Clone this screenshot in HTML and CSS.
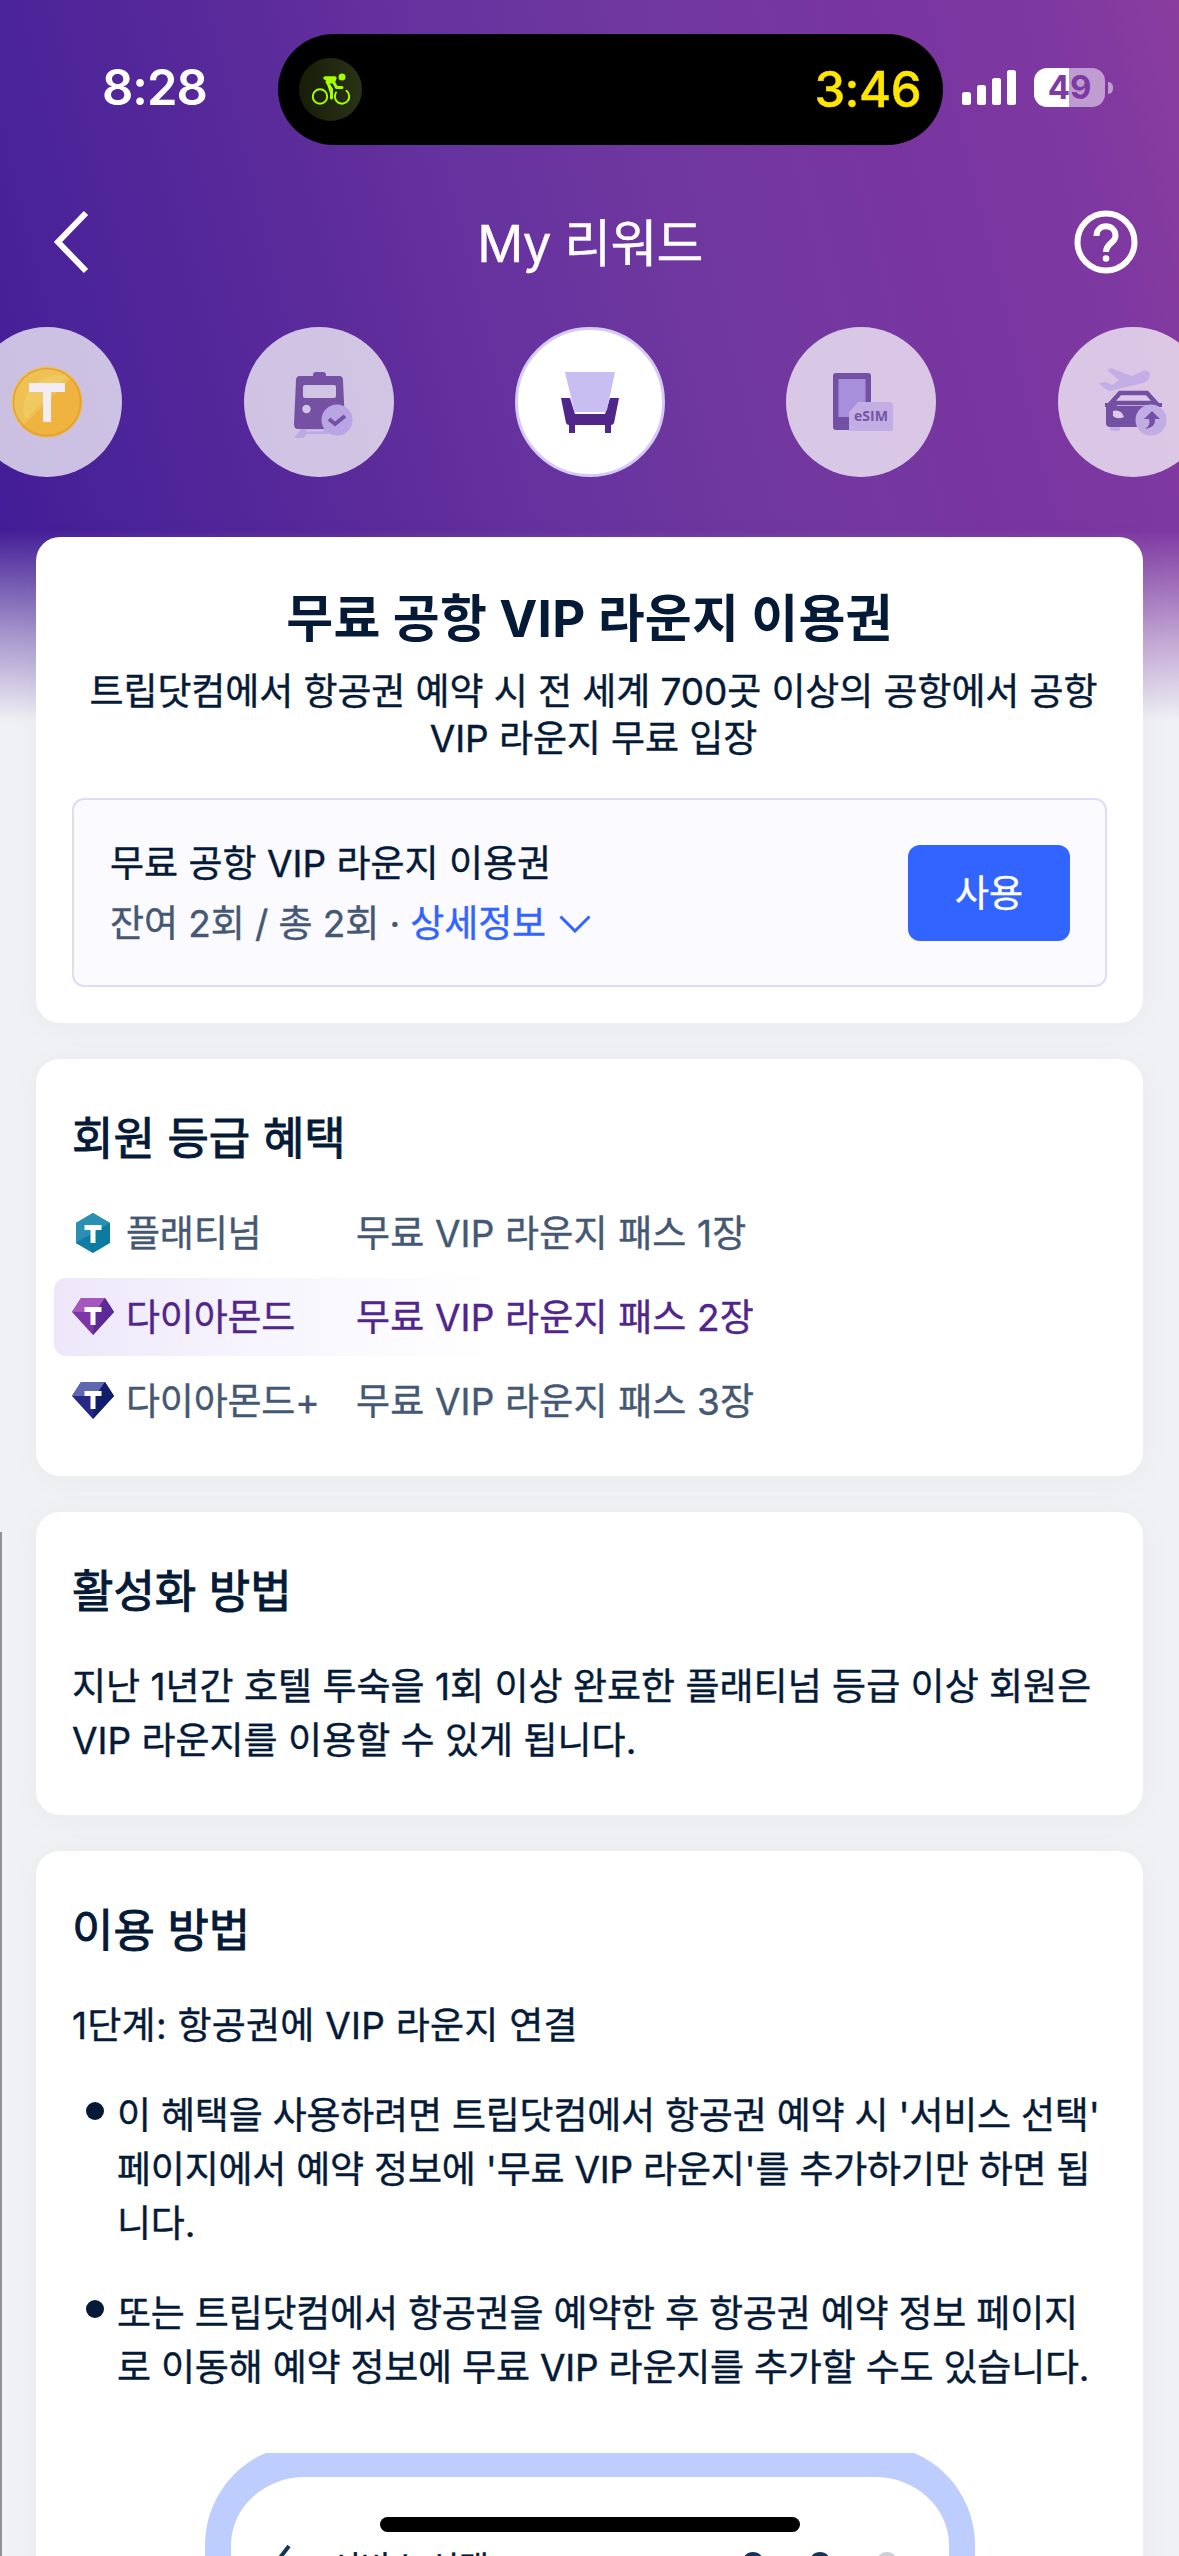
FILE: index.html
```html
<!DOCTYPE html>
<html lang="ko">
<head>
<meta charset="utf-8">
<title>My 리워드</title>
<link rel="stylesheet" href="styles.css">
</head>
<body>
<div class="screen">
  <div class="edge"></div>
  <div class="status">
    <div class="clock">8:28</div>
    <div class="island">
      <div class="activity">
        <svg width="40" height="34" viewBox="0 0 40 34" fill="none" stroke="#a6ff00" stroke-width="2" stroke-linecap="round" stroke-linejoin="round">
          <circle cx="9" cy="24.500" r="7.200"/><path d="M35.500 18.800A7.200 7.200 0 1 1 25 20.500"/>
          <circle cx="31" cy="5" r="3.500" fill="#a6ff00" stroke="none"/>
          <path d="M14 6H24L22.500 10L25.500 15.500H31" stroke-width="3"/>
          <path d="M14 6H24L22 10H16L20.500 17V26" stroke-width="3" fill="#a6ff00"/>
        </svg>
      </div>
      <div class="timer">3:46</div>
    </div>
    <svg class="signal" width="54" height="36" viewBox="0 0 54 36" fill="#fff"><rect y="22" width="9" height="13" rx="2.500"/><rect x="15" y="15" width="9" height="20" rx="2.500"/><rect x="30" y="8" width="9" height="27" rx="2.500"/><rect x="45" y="0" width="9" height="35" rx="2.500"/></svg>
    <div class="battery">49</div>
    <div class="nub"></div>
  </div>
  <div class="nav">
    <svg width="40" height="64" viewBox="0 0 40 64" fill="none" stroke="#fff" stroke-width="6"><path d="M34 3L6 32L34 61"/></svg>
    <div class="nav-title">My 리워드</div>
    <svg width="64" height="64" viewBox="0 0 64 64" fill="none" stroke="#fff" stroke-width="6"><circle cx="32" cy="32" r="28.500"/><path d="M22.500 26C22.500 13 41.500 13 41.500 26C41.500 33 32 33 32 42"/><circle cx="32" cy="48.500" r="3.300" fill="#fff" stroke="none"/></svg>
  </div>
  <div class="tabs">
    <div class="tab">
      <svg width="100" height="100" viewBox="0 0 100 100"><circle cx="50" cy="50" r="35.500" fill="#efc052"/><path d="M25 75A35 35 0 0 0 75 25Z" fill="#efb440"/><path d="M28 68A34 34 0 0 1 70 25Z" fill="#f0ca60"/><circle cx="50" cy="50" r="33.500" fill="none" stroke="#e2a03c" stroke-width="1.500"/><path d="M32 31H68V40H54V70H46V40H32Z" fill="#f2edf4"/></svg>
    </div>
    <div class="tab">
      <svg width="100" height="100" viewBox="0 0 100 100"><path d="M33 76H56L60 82H38L34 86H25Z" fill="#bcaae3"/><path d="M37 78.500H54" stroke="#d1c4e5" stroke-width="1.500"/><path d="M44 23Q44 20 47 20H54Q57 20 57 23V24H70Q74 24 74 28L76 72Q76 77 72 77H29Q25 77 25 72L27 28Q27 24 31 24H44Z" fill="#7551a4"/><rect x="34" y="33" width="33" height="13" rx="2" fill="#d1c4e5"/><circle cx="37.500" cy="57" r="4.200" fill="#d1c4e5"/><circle cx="68" cy="68" r="15.500" fill="#b9a5e3"/><path d="M60 67L66 72L76 64" fill="none" stroke="#7551a4" stroke-width="4"/></svg>
    </div>
    <div class="tab active">
      <svg width="100" height="100" viewBox="0 0 100 100"><path d="M21 46H30L35 62H65L70 46H79L74 71Q73 73 71 73V81H65V73H35V81H29V73Q27 73 26 71Z" fill="#50268b"/><path d="M25 20H75L67 58Q66 60 64 60H36Q34 60 34 58Z" fill="#c9bef1"/></svg>
    </div>
    <div class="tab">
      <svg width="100" height="100" viewBox="0 0 100 100"><rect x="22" y="21" width="38" height="57" rx="3" fill="#7450a5"/><rect x="27.500" y="27" width="27" height="38" fill="#a78fdc"/><path d="M47 50H79Q82 50 82 53V76Q82 79 79 79H38V60Z" fill="#c2aee4"/><text x="43" y="69" font-family="Open Sans, sans-serif" font-weight="700" font-size="15" textLength="34" lengthAdjust="spacingAndGlyphs" fill="#7653a6">eSIM</text></svg>
    </div>
    <div class="tab">
      <svg width="100" height="100" viewBox="0 0 100 100"><path d="M16 31L23 30L29 33L36 28L24 18L28 16L49 24L60 19Q67 18 67 23Q67 28 60 31L27 39Q21 37 16 31Z" fill="#c3afe5"/><rect x="27" y="73" width="10" height="6" rx="2" fill="#c3afe5"/><path d="M28 51L37 41H64L73 51Z" fill="#dccae7" stroke="#7450a5" stroke-width="4.500"/><path d="M22 51H32L34 54H67L69 51H79V55H76V71Q76 75 72 75H27Q23 75 23 71V55H22Z" fill="#7450a5"/><path d="M30 59Q38 57 41 65Q34 68 30 64Z" fill="#dccae7"/><circle cx="68" cy="68" r="15.500" fill="#c1ade4"/><path d="M69 59L77 67H72Q73 75 62 77Q68 73 66 67H61Z" fill="#7450a5"/></svg>
    </div>
  </div>
  <div class="cards">
    <section class="card hero">
      <h1>무료 공항 VIP 라운지 이용권</h1>
      <p class="sub">트립닷컴에서 항공권 예약 시 전 세계 700곳 이상의 공항에서 공항<br>VIP 라운지 무료 입장</p>
      <div class="voucher">
        <div class="voucher-text">
          <div class="v1">무료 공항 VIP 라운지 이용권</div>
          <div class="v2">잔여 2회 / 총 2회 · <span class="link">상세정보</span><svg width="32" height="18" viewBox="0 0 32 18" fill="none" stroke="#3264ff" stroke-width="3"><path d="M1.500 1.500L16 16L30.500 1.500"/></svg></div>
        </div>
        <div class="use">사용</div>
      </div>
    </section>
    <section class="card tiers">
      <h2>회원 등급 혜택</h2>
      <div class="tier">
        <svg width="42" height="42" viewBox="0 0 42 42"><path d="M21 1L38 11V31L21 41L4 31V11Z" fill="#0b7c9f"/><path d="M21 1L38 11L4 31V11Z" fill="#298fb3"/><path d="M4 31L13 25L21 41Z" fill="#117fa5"/><path d="M12.500 13H29.500V18H23.500V31H18.500V18H12.500Z" fill="#fff"/></svg>
        <span class="name">플래티넘</span><span class="perk">무료 VIP 라운지 패스 1장</span>
      </div>
      <div class="tier current">
        <svg width="42" height="42" viewBox="0 0 42 42"><path d="M9 2H33L42 16L21 39L0 16Z" fill="#7d35a8"/><path d="M9 2H33L25 16H0Z" fill="#a657bd"/><path d="M33 2L42 16L21 39L23 16Z" fill="#5c2996"/><path d="M12.500 11H29.500V16H23.500V29H18.500V16H12.500Z" fill="#fff"/></svg>
        <span class="name">다이아몬드</span><span class="perk">무료 VIP 라운지 패스 2장</span>
      </div>
      <div class="tier">
        <svg width="42" height="42" viewBox="0 0 42 42"><path d="M9 2H33L42 16L21 39L0 16Z" fill="#252884"/><path d="M9 2H33L25 16H0Z" fill="#5f67b1"/><path d="M33 2L42 16L21 39L23 16Z" fill="#101e6c"/><path d="M12.500 11H29.500V16H23.500V29H18.500V16H12.500Z" fill="#fff"/></svg>
        <span class="name">다이아몬드+</span><span class="perk">무료 VIP 라운지 패스 3장</span>
      </div>
    </section>
    <section class="card activate">
      <h2>활성화 방법</h2>
      <p>지난 1년간 호텔 투숙을 1회 이상 완료한 플래티넘 등급 이상 회원은<br>VIP 라운지를 이용할 수 있게 됩니다.</p>
    </section>
    <section class="card usage">
      <h2>이용 방법</h2>
      <p>1단계: 항공권에 VIP 라운지 연결</p>
      <ul>
        <li>이 혜택을 사용하려면 트립닷컴에서 항공권 예약 시 '서비스 선택'<br>페이지에서 예약 정보에 '무료 VIP 라운지'를 추가하기만 하면 됩<br>니다.</li>
        <li>또는 트립닷컴에서 항공권을 예약한 후 항공권 예약 정보 페이지<br>로 이동해 예약 정보에 무료 VIP 라운지를 추가할 수도 있습니다.</li>
      </ul>
      <div class="preview"><div class="phone">
        <svg width="14" height="28" viewBox="0 0 14 28" fill="none" stroke="#17345c" stroke-width="4"><path d="M12 1L2 14L12 27"/></svg>
        <span class="phone-title">서비스 선택</span>
        <i class="dot"></i><i class="dot"></i><i class="dot pale"></i>
      </div></div>
    </section>
  </div>
  <div class="home"></div>
</div>
</body>
</html>
```
FILE: styles.css
```css
* { box-sizing: border-box; margin: 0; padding: 0; }
body { margin: 0; background: #f0f1f5; }
.screen {
  position: relative; width: 1179px; height: 2556px; overflow: hidden;
  font-family: Inter, "Noto Sans CJK KR", sans-serif;
  font-size: 37px; color: #051a37; white-space: nowrap;
  -webkit-text-stroke: .4px currentColor;
  display: flex; flex-direction: column;
  background:
    linear-gradient(to bottom, rgba(240,241,245,0) 530px, rgba(240,241,245,.6) 640px, #f0f1f5 722px),
    linear-gradient(76deg, #421c97 0%, #431d97 4%, #4c2499 14%, #56289a 26%, #5f2d9b 35%, #67339f 46%, #6d369f 55%, #7338a0 65%, #7835a0 76%, #7e38a1 90%, #8a3d9e 100%) 0 0 / 1179px 730px no-repeat,
    #f0f1f5;
}
svg { display: block; flex: none; }
.edge { position: absolute; left: 0; top: 1532px; width: 2px; height: 1024px; background: #919191; }

.status { display: flex; align-items: center; height: 178px; flex: none; color: #fff; }
.clock { width: 176px; margin: -3px 0 0 102px; font-size: 49px; font-weight: 600; letter-spacing: -1px; -webkit-text-stroke: 0; }
.island { width: 665px; height: 111px; border-radius: 56px; background: #000; display: flex; align-items: center; justify-content: space-between; padding: 0 22px 0 21px; }
.activity { width: 63px; height: 63px; border-radius: 50%; background: linear-gradient(90deg, #171d08, #293317); display: flex; align-items: center; justify-content: center; }
.timer { color: #ffe600; font-size: 49px; font-weight: 500; letter-spacing: -.5px; }
.signal { margin: -2px 0 0 19px; }
.battery { margin: -3px 0 0 18px; width: 71px; height: 39px; border-radius: 13px; background: linear-gradient(90deg, #fff 35px, rgba(255,255,255,.5) 35px); color: #7d3aa3; font-size: 33px; font-weight: 700; line-height: 39px; text-align: center; -webkit-text-stroke: 0; }
.nub { width: 5px; height: 12px; margin: -3px 0 0 3px; border-radius: 0 6px 6px 0; background: rgba(255,255,255,.5); }

.nav { display: flex; align-items: center; justify-content: space-between; height: 128px; padding: 0 41px 0 52px; flex: none; color: #fff; }
.nav-title { font-size: 51px; line-height: 60px; margin: 4px 0 0 14px; letter-spacing: -.8px; }

.tabs { display: flex; justify-content: center; gap: 121.300px; margin: 21px 0 0 1px; height: 150px; flex: none; }
.tab { flex: none; width: 150px; height: 150px; border-radius: 50%; background: rgba(255,255,255,.72); display: flex; align-items: center; justify-content: center; -webkit-text-stroke: 0; }
.active { background: #fff; border: 3px solid #d5c9f6; }

.cards { display: flex; flex-direction: column; gap: 36px; padding: 60px 36px 0; }
.card { background: #fff; border-radius: 24px; padding: 0 36px; box-shadow: 0 4px 36px rgba(20,60,70,.03); flex: none; }
h1 { font-size: 51px; line-height: 60px; font-weight: 700; text-align: center; letter-spacing: .2px; -webkit-text-stroke: 0; }
h2 { font-size: 45px; line-height: 60px; font-weight: 400; -webkit-text-stroke: 1px currentColor; }
.hero { height: 486px; padding-top: 52px; }
.sub { line-height: 46.500px; margin: 20px -8px 0 0; text-align: center; letter-spacing: -.1px; }
.voucher { margin-top: 36px; height: 189px; border: 2px solid #e2daf6; border-radius: 12px; background: #fbfaff; display: flex; align-items: center; justify-content: space-between; padding: 0 35px 0 36px; }
.v1, .v2 { line-height: 60px; position: relative; top: 1px; }
.v2 { color: #455873; display: flex; align-items: center; white-space: pre; letter-spacing: -.1px; }
.link { color: #3264ff; }
.v2 svg { margin-left: 13px; }
.use { width: 162px; height: 96px; border-radius: 12px; background: #3264ff; color: #fff; line-height: 97px; text-align: center; }

.tiers { height: 417px; padding-top: 50px; display: flex; flex-direction: column; }
.tiers h2 { margin-bottom: 25px; }
.tier { display: flex; align-items: center; height: 78px; margin: 0 -18px 6px; padding-left: 18px; border-radius: 12px; color: #455873; }
.name { width: 230px; margin: -4px 0 0 12px; letter-spacing: -.2px; }
.perk { margin-top: -4px; letter-spacing: .15px; }
.current { background: linear-gradient(90deg, #ede7f9, #f6f4fd 190px, rgba(255,255,255,0) 440px); color: #50268b; }

.activate { height: 303px; padding-top: 50px; }
.activate p { line-height: 54px; margin-top: 38px; }
.usage { height: 760px; padding-top: 50px; }
.usage p { line-height: 54px; margin-top: 38px; letter-spacing: .25px; }
ul { list-style: none; display: flex; flex-direction: column; gap: 36px; margin-top: 36px; }
li { position: relative; line-height: 54px; padding-left: 45px; letter-spacing: -.22px; }
li::before { content: ""; position: absolute; left: 14px; top: 13px; width: 18px; height: 18px; border-radius: 50%; background: #051a37; }
.preview { margin: 58px auto 0; width: 770px; height: 200px; overflow: hidden; }
.phone { margin-top: -8px; height: 300px; border: 26px solid #bdcdfe; border-top-width: 32px; border-radius: 100px; display: flex; padding: 68px 0 0 46px; align-items: flex-start; }
.phone-title { font-size: 33px; line-height: 40px; margin: 3px 253px 0 40px; font-weight: 400; letter-spacing: -.5px; }
.dot { width: 22px; height: 22px; border-radius: 50%; border: 4px solid #17345c; margin: 7px 45px 0 0; }
.pale { border-color: #cdd0d5; }
.home { position: absolute; left: 380px; top: 2517px; width: 420px; height: 15px; border-radius: 8px; background: #000; }
```
